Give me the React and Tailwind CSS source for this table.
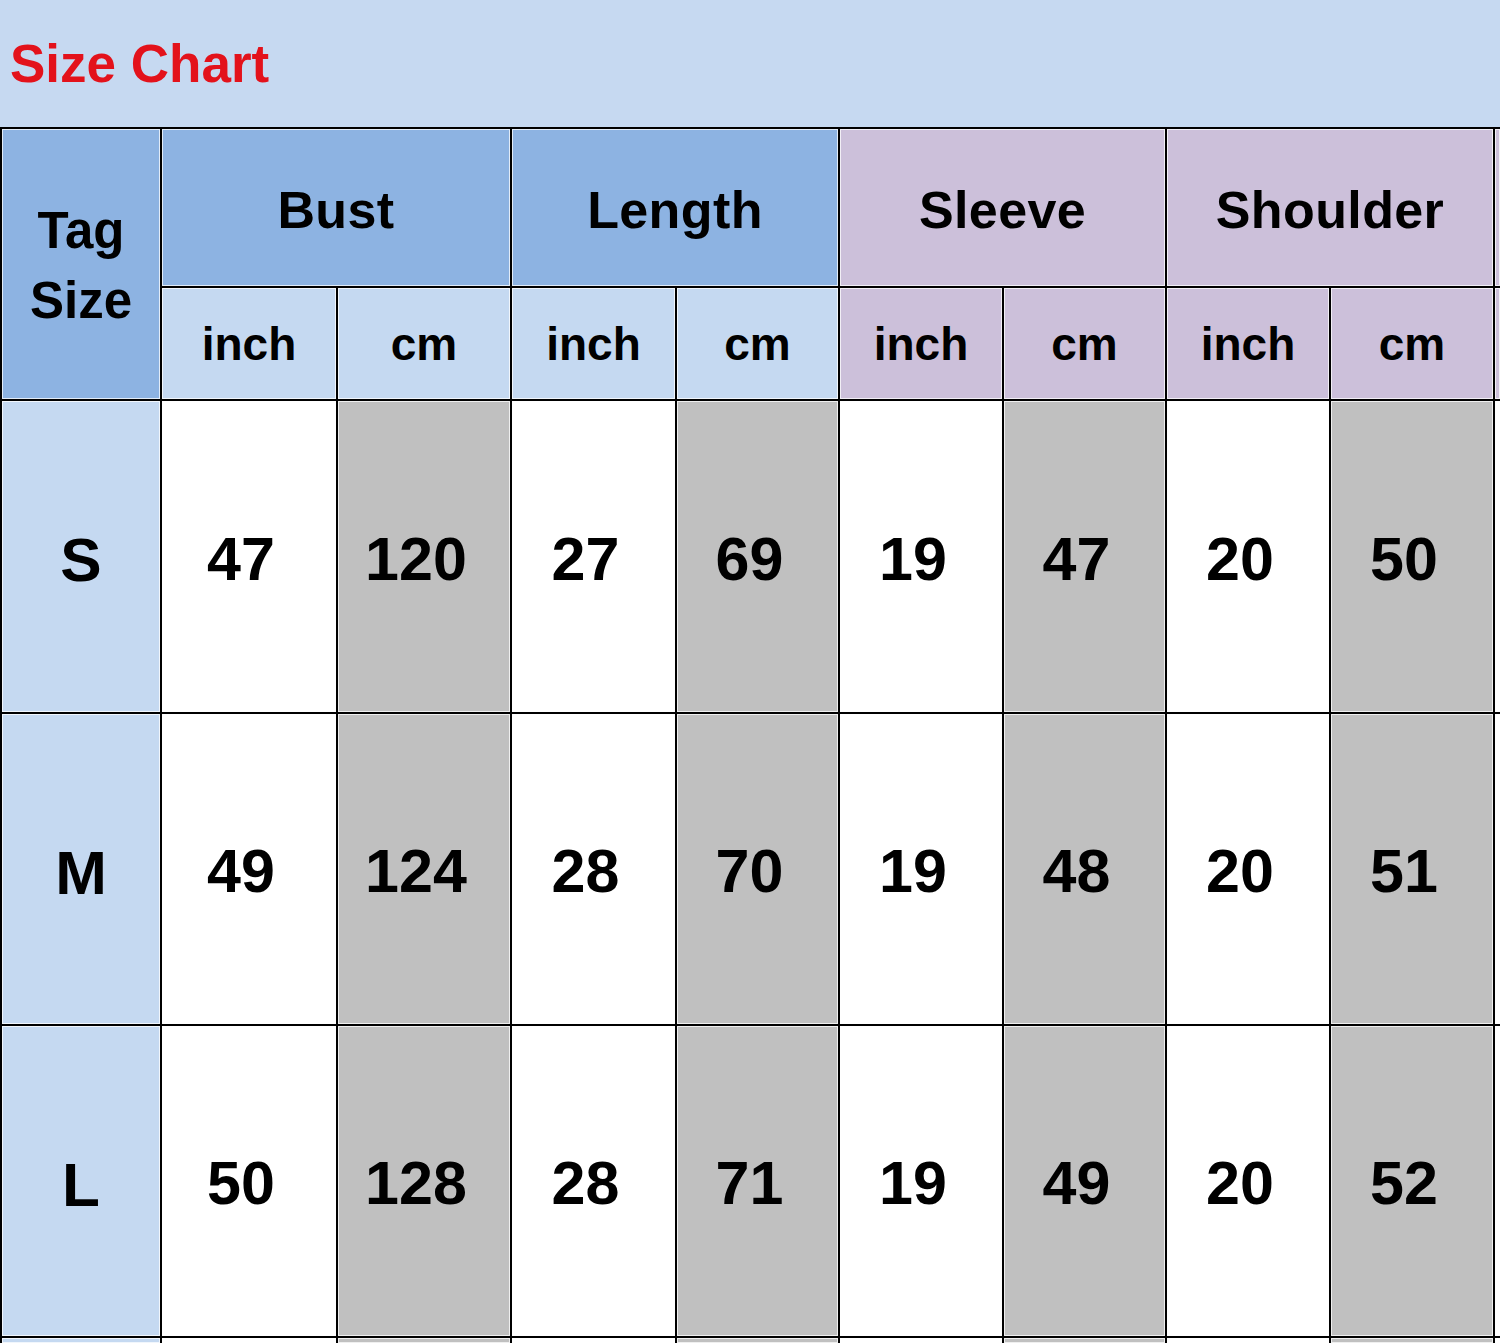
import React from "react";

const groups = [
  { name: "Bust", head: "bg-[#8db3e2]", sub: "bg-[#c5d9f1]" },
  { name: "Length", head: "bg-[#8db3e2]", sub: "bg-[#c5d9f1]" },
  { name: "Sleeve", head: "bg-[#ccc0da]", sub: "bg-[#ccc0da]" },
  { name: "Shoulder", head: "bg-[#ccc0da]", sub: "bg-[#ccc0da]" },
];

const rows = [
  { tag: "S", values: ["47", "120", "27", "69", "19", "47", "20", "50"] },
  { tag: "M", values: ["49", "124", "28", "70", "19", "48", "20", "51"] },
  { tag: "L", values: ["50", "128", "28", "71", "19", "49", "20", "52"] },
];

const ring = "shadow-[inset_0_0_0_1px_rgba(255,255,255,0.75)]";

const SizeChart = () => {
  return (
    <div
      className="w-[1500px] h-[1343px] overflow-hidden bg-[#c6d9f1] text-black font-bold"
      style={{ fontFamily: '"Liberation Sans", Arial, sans-serif' }}
    >
      {/* title bar */}
      <div className="h-[127px] pl-[10px] pt-[37px]">
        <h1 className="text-[53px] leading-none text-[#e3121b]">Size Chart</h1>
      </div>

      {/* table */}
      <div className="grid bg-black gap-[2px] pt-[2px] pl-[2px] grid-cols-[158px_174px_172px_163px_161px_162px_161px_162px_162px_5px] grid-rows-[157px_111px_311px_310px_310px_5px]">
        <div
          className={`row-span-2 bg-[#8db3e2] ${ring} flex items-center justify-center text-center text-[51px] leading-[70px] pt-[4px]`}
        >
          Tag
          <br />
          Size
        </div>
        {groups.map((g) => (
          <div
            key={g.name}
            className={`col-span-2 ${g.head} ${ring} flex items-center justify-center text-[52px] tracking-[0.4px] pt-[4px]`}
          >
            {g.name}
          </div>
        ))}
        <div className={`bg-[#ccc0da] ${ring}`} />

        {groups.map((g) =>
          ["inch", "cm"].map((u) => (
            <div
              key={g.name + u}
              className={`${g.sub} ${ring} flex items-center justify-center text-[46px] pt-[2px]`}
            >
              {u}
            </div>
          ))
        )}
        <div className={`bg-[#ccc0da] ${ring}`} />

        {rows.map((r) => (
          <React.Fragment key={r.tag}>
            <div
              className={`bg-[#c5d9f1] ${ring} flex items-center justify-center text-[62px] pt-[6px]`}
            >
              {r.tag}
            </div>
            {r.values.map((v, i) => (
              <div
                key={i}
                className={`${i % 2 ? "bg-[#c0c0c0]" : "bg-white"} ${ring} flex items-center justify-center text-[61px] pt-[6px] pr-[16px]`}
              >
                {v}
              </div>
            ))}
            <div className="bg-white" />
          </React.Fragment>
        ))}

        <div className={`bg-[#c5d9f1] ${ring}`} />
        {rows[0].values.map((_, i) => (
          <div key={i} className={`${i % 2 ? "bg-[#c0c0c0]" : "bg-white"} ${ring}`} />
        ))}
        <div className="bg-white" />
      </div>
    </div>
  );
};

export default function App() {
  return <SizeChart />;
}
